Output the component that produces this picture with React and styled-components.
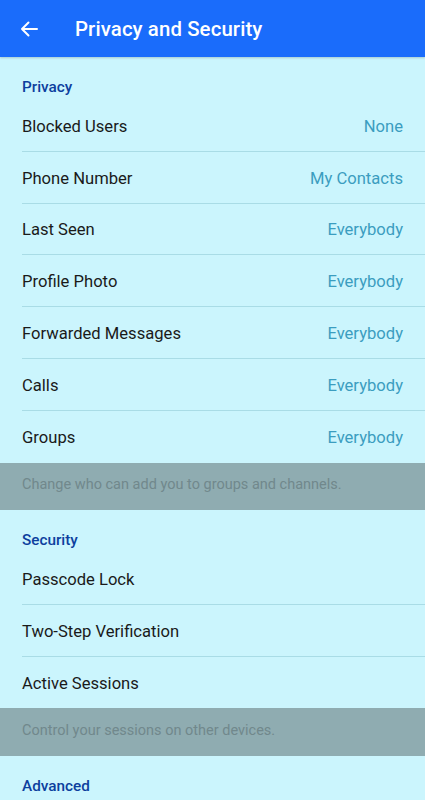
import React from "react"
import styled, { createGlobalStyle } from "styled-components"

const GlobalStyle = createGlobalStyle`
  html, body {
    margin: 0;
    padding: 0;
    background: #cbf5fd;
  }
  body {
    font-family: Roboto, "Noto Sans", sans-serif;
  }
`

const Page = styled.div`
  width: 425px;
  height: 800px;
  overflow: hidden;
  background: #cbf5fd;
`

const TopBar = styled.header`
  height: 57px;
  background: #1a6cfb;
  display: flex;
  align-items: center;
  padding-left: 19px;
  box-shadow: 0 1px 2px rgba(0, 0, 0, 0.18);
  position: relative;
`

const BackButton = styled.div`
  width: 20px;
  height: 20px;
  display: flex;
  align-items: center;
  justify-content: center;
  margin-right: 36px;
`

const Title = styled.h1`
  margin: 0;
  color: #fff;
  font-size: 20.4px;
  font-weight: 500;
  letter-spacing: 0.1px;
`

const SectionTitle = styled.div`
  height: 43px;
  box-sizing: border-box;
  padding: 20px 22px 0;
  color: #0d3f9e;
  font-size: 15.3px;
  font-weight: 500;
  line-height: 20px;
`

const Row = styled.div`
  height: 51.8px;
  margin-left: 22px;
  padding: 2px 22px 0 0;
  display: flex;
  align-items: center;
  justify-content: space-between;
  border-bottom: ${p => (p.last ? "none" : "1px solid #a9dce6")};
  box-sizing: border-box;
  font-size: 16.6px;
  color: #1a1a1a;
`

const Value = styled.span`
  color: #3b9dc0;
`

const InfoBand = styled.div`
  height: 47.5px;
  box-sizing: border-box;
  background: #8facb1;
  color: #71888c;
  font-size: 14.5px;
  padding: 0 22px 3px;
  display: flex;
  align-items: center;
`

const privacyRows = [
  ["Blocked Users", "None"],
  ["Phone Number", "My Contacts"],
  ["Last Seen", "Everybody"],
  ["Profile Photo", "Everybody"],
  ["Forwarded Messages", "Everybody"],
  ["Calls", "Everybody"],
  ["Groups", "Everybody"],
]

const securityRows = ["Passcode Lock", "Two-Step Verification", "Active Sessions"]

const ArrowLeft = () => (
  <svg width="18" height="16" viewBox="0 0 18 16">
    <path
      d="M17 8H2M8.5 1.5L2 8l6.5 6.5"
      fill="none"
      stroke="#fff"
      strokeWidth="2"
      strokeLinecap="round"
      strokeLinejoin="round"
    />
  </svg>
)

const App = () => (
  <Page>
    <GlobalStyle />
    <TopBar>
      <BackButton>
        <ArrowLeft />
      </BackButton>
      <Title>Privacy and Security</Title>
    </TopBar>

    <SectionTitle>Privacy</SectionTitle>
    {privacyRows.map(([label, value], i) => (
      <Row key={label} last={i === privacyRows.length - 1}>
        <span>{label}</span>
        <Value>{value}</Value>
      </Row>
    ))}
    <InfoBand>Change who can add you to groups and channels.</InfoBand>

    <SectionTitle>Security</SectionTitle>
    {securityRows.map((label, i) => (
      <Row key={label} last={i === securityRows.length - 1}>
        <span>{label}</span>
      </Row>
    ))}
    <InfoBand>Control your sessions on other devices.</InfoBand>

    <SectionTitle>Advanced</SectionTitle>
  </Page>
)

export default App
